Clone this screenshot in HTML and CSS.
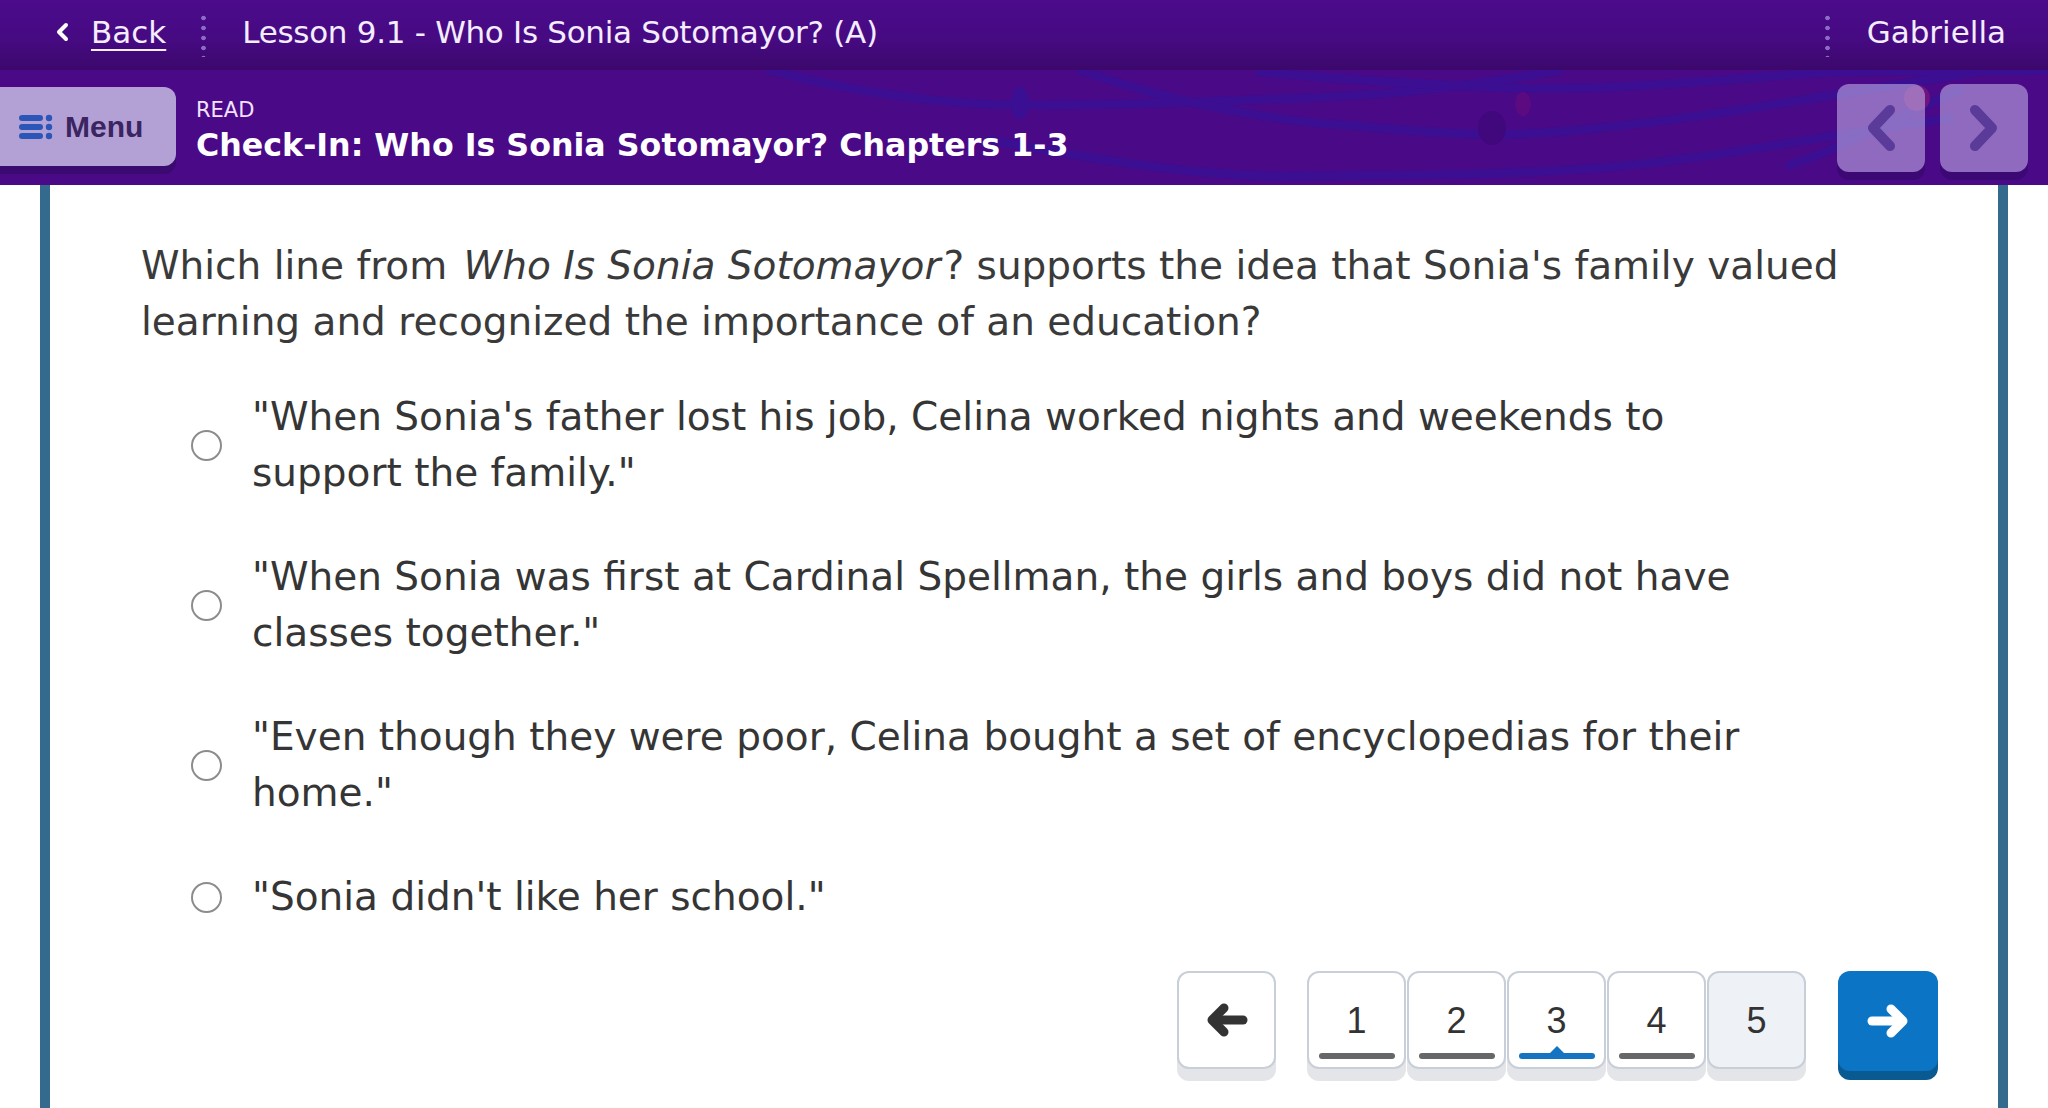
FILE: index.html
```html
<!DOCTYPE html>
<html lang="en">
<head>
<meta charset="utf-8">
<title>Check-In</title>
<link rel="stylesheet" href="styles.css">
</head>
<body>
<header class="topbar">
  <a class="back" href="#">
    <svg class="back-chev" width="14" height="20" viewBox="0 0 14 20"><polyline points="11,3 4,10 11,17" fill="none" stroke="#fff" stroke-width="4" stroke-linecap="round" stroke-linejoin="round"/></svg>
    <span class="back-label">Back</span>
  </a>
  <span class="vdots"></span>
  <span class="lesson">Lesson 9.1 - Who Is Sonia Sotomayor? (A)</span>
  <span class="spacer"></span>
  <span class="vdots"></span>
  <span class="user">Gabriella</span>
</header>

<div class="subbar">
  <svg class="deco" width="2048" height="115" viewBox="0 70 2048 115" aria-hidden="true">
    <g fill="none" stroke="#3a0f93" stroke-width="9" stroke-linecap="round" opacity="0.85">
      <path d="M 770 70 C 860 95, 960 105, 1020 105 C 1150 105, 1250 100, 1300 98 C 1400 95, 1480 85, 1560 70"/>
      <path d="M 1080 70 C 1150 95, 1250 120, 1357 126 C 1420 132, 1480 136, 1520 134 C 1650 128, 1800 100, 2000 68"/>
      <path d="M 1260 72 C 1350 80, 1450 86, 1520 88 C 1620 90, 1720 80, 1800 74 C 1880 68, 1960 72, 2048 70"/>
      <path d="M 990 140 C 1100 160, 1200 178, 1306 176 C 1420 174, 1480 176, 1600 168 C 1700 160, 1800 140, 1950 118"/>
      <path d="M 1790 165 C 1850 145, 1900 115, 1960 90"/>
    </g>
    <ellipse cx="1020" cy="103" rx="9" ry="16" fill="#3a0f93"/>
    <ellipse cx="1492" cy="128" rx="14" ry="17" fill="#41087d"/>
    <ellipse cx="1523" cy="104" rx="8" ry="12" fill="#5c0a80"/>
    <circle cx="1917" cy="98" r="13" fill="#6e1480"/>
  </svg>
  <button class="menu-btn">
    <svg width="34" height="26" viewBox="0 0 34 26" aria-hidden="true">
      <g fill="#2b56b8">
        <rect x="0" y="1" width="24" height="6" rx="3"/>
        <rect x="0" y="10" width="24" height="6" rx="3"/>
        <rect x="0" y="19" width="24" height="6" rx="3"/>
        <circle cx="30" cy="4" r="3.2"/>
        <circle cx="30" cy="13" r="3.2"/>
        <circle cx="30" cy="22" r="3.2"/>
      </g>
    </svg>
    <span>Menu</span>
  </button>
  <div class="titles">
    <div class="kicker">READ</div>
    <h1 class="title">Check-In: Who Is Sonia Sotomayor? Chapters 1-3</h1>
  </div>
  <div class="navs">
    <button class="nav-btn" aria-label="Previous">
      <svg width="34" height="48" viewBox="0 0 34 48"><polyline points="26,6 9,24 26,42" fill="none" stroke="#5b3b99" stroke-width="10" stroke-linecap="round" stroke-linejoin="round"/></svg>
    </button>
    <button class="nav-btn" aria-label="Next">
      <svg width="34" height="48" viewBox="0 0 34 48"><polyline points="8,6 25,24 8,42" fill="none" stroke="#5b3b99" stroke-width="10" stroke-linecap="round" stroke-linejoin="round"/></svg>
    </button>
  </div>
</div>

<main class="content">
  <p class="question">Which line from <em>Who Is Sonia Sotomayor</em>? supports the idea that Sonia's family valued learning and recognized the importance of an education?</p>
  <ul class="options">
    <li class="option"><span class="radio"></span><span class="opt-text">"When Sonia's father lost his job, Celina worked nights and weekends to support the family."</span></li>
    <li class="option"><span class="radio"></span><span class="opt-text">"When Sonia was first at Cardinal Spellman, the girls and boys did not have classes together."</span></li>
    <li class="option"><span class="radio"></span><span class="opt-text">"Even though they were poor, Celina bought a set of encyclopedias for their home."</span></li>
    <li class="option"><span class="radio"></span><span class="opt-text">"Sonia didn't like her school."</span></li>
  </ul>
  <nav class="pager">
    <button class="pbtn arrow-btn" aria-label="Previous question">
      <svg width="44" height="34" viewBox="0 0 44 34"><g fill="none" stroke="#333" stroke-width="9" stroke-linecap="round" stroke-linejoin="round"><line x1="8" y1="17" x2="38" y2="17"/><polyline points="19,5 7,17 19,29"/></g></svg>
    </button>
    <div class="numbers">
      <button class="pbtn num"><span class="digit">1</span><span class="bar"></span></button>
      <button class="pbtn num"><span class="digit">2</span><span class="bar"></span></button>
      <button class="pbtn num current"><span class="digit">3</span><span class="bar"></span></button>
      <button class="pbtn num"><span class="digit">4</span><span class="bar"></span></button>
      <button class="pbtn num todo"><span class="digit">5</span></button>
    </div>
    <button class="pbtn next-btn" aria-label="Next question">
      <svg width="44" height="34" viewBox="0 0 44 34"><g fill="none" stroke="#fff" stroke-width="9" stroke-linecap="round" stroke-linejoin="round"><line x1="6" y1="17" x2="36" y2="17"/><polyline points="25,5 37,17 25,29"/></g></svg>
    </button>
  </nav>
</main>
</body>
</html>
```

FILE: styles.css
```css
* { box-sizing: border-box; }
html, body {
  margin: 0;
  padding: 0;
  width: 2048px;
  height: 1108px;
  overflow: hidden;
  background: #fff;
  font-family: "DejaVu Sans", "Open Sans", sans-serif;
}

/* ---------- top bar ---------- */
.topbar {
  height: 70px;
  display: flex;
  align-items: center;
  padding: 0 42px 6px 55px;
  background: linear-gradient(#4b0b8b 0%, #460a82 55%, #3c086c 100%);
  color: #f4ecff;
  font-size: 31px;
}
.back {
  display: flex;
  align-items: center;
  color: #f4ecff;
  text-decoration: none;
}
.back-chev { margin-right: 22px; }
.back-label {
  text-decoration: underline;
  text-decoration-thickness: 2px;
  text-underline-offset: 6px;
}
.vdots {
  width: 5px;
  height: 44px;
  margin-top: 6px;
  background: radial-gradient(circle, #8a6bc6 2px, transparent 2.6px) 0 0 / 5px 10px repeat-y;
}
.topbar .back + .vdots { margin-left: 35px; margin-right: 36px; }
.lesson { letter-spacing: -0.3px; }
.spacer { flex: 1; }
.user { margin-left: 37px; }

/* ---------- sub bar ---------- */
.subbar {
  position: relative;
  height: 115px;
  display: flex;
  align-items: center;
  background: #4a0987;
  overflow: hidden;
}
.deco {
  position: absolute;
  left: 0;
  top: 0;
}
.menu-btn {
  position: relative;
  width: 176px;
  height: 79px;
  margin-top: -2px;
  display: flex;
  align-items: center;
  gap: 12px;
  padding: 0 0 0 19px;
  border: none;
  border-radius: 0 12px 12px 0;
  background: #b3a1d6;
  box-shadow: 0 8px 0 #3b0a70;
  color: #3a2461;
  font-family: "Liberation Sans", Arial, sans-serif;
  font-weight: bold;
  font-size: 30px;
}
.titles {
  position: relative;
  margin-left: 20px;
  margin-top: 6px;
  color: #fbf4ff;
}
.kicker {
  font-size: 21px;
  line-height: 26px;
  color: #f2e2ff;
}
.title {
  margin: 2px 0 0;
  font-size: 31.7px;
  line-height: 40px;
  font-weight: bold;
  color: #fff;
}
.navs {
  position: relative;
  margin-left: auto;
  margin-right: 20px;
  display: flex;
  gap: 15px;
}
.nav-btn {
  width: 88px;
  height: 88px;
  border: none;
  border-radius: 12px;
  background: rgba(200, 186, 236, 0.55);
  box-shadow: 0 8px 0 rgba(50, 8, 100, 0.55);
  display: flex;
  align-items: center;
  justify-content: center;
  padding: 0;
}

/* ---------- content ---------- */
.content {
  margin: 0 40px;
  height: 923px;
  border-left: 10px solid #336a8e;
  border-right: 10px solid #336a8e;
  padding: 53px 60px 0 91px;
  color: #3a3a3a;
}
.question {
  margin: 0;
  font-size: 39px;
  line-height: 56px;
  color: #3a3a3a;
}
.question em { font-style: oblique; padding: 0 3px 0 4px; }
.options {
  list-style: none;
  margin: 39px 0 0;
  padding: 0 0 0 50px;
  display: flex;
  flex-direction: column;
  gap: 48px;
}
.option {
  display: flex;
  align-items: center;
}
.radio {
  flex: none;
  width: 31px;
  height: 31px;
  border: 2.5px solid #8c8c8c;
  border-radius: 50%;
  margin-right: 30px;
}
.opt-text {
  max-width: 1540px;
  font-size: 39px;
  line-height: 56px;
  color: #353535;
}

/* ---------- pager ---------- */
.pager {
  margin-top: 46px;
  display: flex;
  justify-content: flex-end;
  align-items: flex-start;
}
.pbtn {
  width: 99px;
  height: 98px;
  padding: 0;
  border: 2px solid #c8cfd8;
  border-radius: 12px;
  background: #fff;
  box-shadow: 0 12px 0 #e3e5e9;
  font-family: "Liberation Sans", Arial, sans-serif;
}
.arrow-btn {
  display: flex;
  align-items: center;
  justify-content: center;
  margin-right: 31px;
}
.numbers {
  display: flex;
  gap: 1px;
}
.num {
  display: flex;
  flex-direction: column;
  align-items: center;
  padding: 30px 0 8px;
}
.digit {
  font-size: 36px;
  line-height: 36px;
  color: #333;
}
.bar {
  position: relative;
  margin-top: auto;
  width: 76px;
  height: 6px;
  border-radius: 3px;
  background: #666769;
}
.current .bar { background: #1474c2; }
.current .bar::before {
  content: "";
  position: absolute;
  left: 50%;
  top: -7px;
  margin-left: -8px;
  border-left: 8px solid transparent;
  border-right: 8px solid transparent;
  border-bottom: 8px solid #1474c2;
}
.todo { background: #eef1f5; }
.next-btn {
  margin-left: 32px;
  width: 100px;
  height: 100px;
  border: none;
  background: #0b74c5;
  box-shadow: 0 9px 0 #0a5a92;
  display: flex;
  align-items: center;
  justify-content: center;
}
```
